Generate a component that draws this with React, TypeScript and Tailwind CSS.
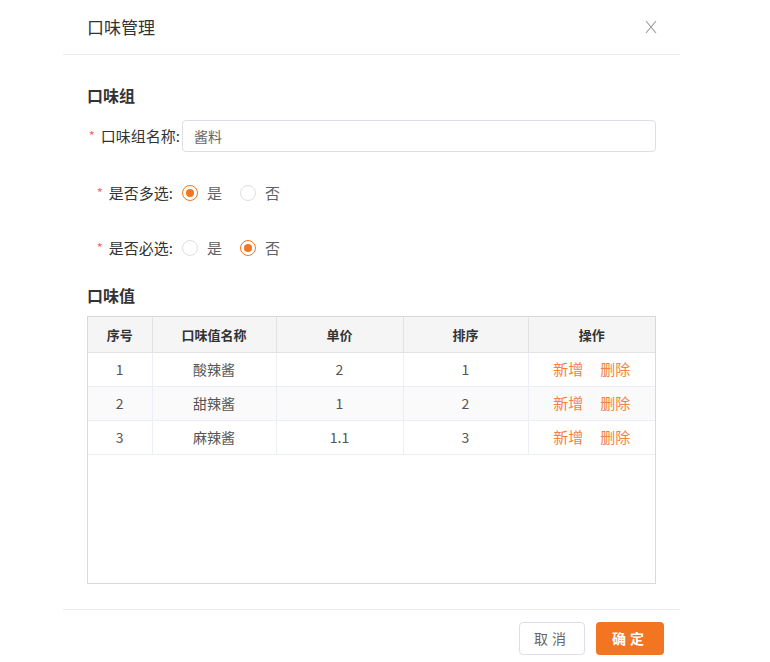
import React from "react";

const ORANGE = "#f47521";

type Row = { id: number; name: string; price: string; sort: number };

const rows: Row[] = [
  { id: 1, name: "酸辣酱", price: "2", sort: 1 },
  { id: 2, name: "甜辣酱", price: "1", sort: 2 },
  { id: 3, name: "麻辣酱", price: "1.1", sort: 3 },
];

function Radio({ checked, label }: { checked: boolean; label: string }) {
  return (
    <label className="flex items-center gap-[9px] cursor-pointer">
      <span
        className={
          checked
            ? "flex h-[16px] w-[16px] items-center justify-center rounded-full border border-[#f47521] bg-white"
            : "h-[16px] w-[16px] rounded-full border border-[#dcdfe6] bg-white"
        }
      >
        {checked && <span className="h-[8px] w-[8px] rounded-full bg-[#f47521]" />}
      </span>
      <span className="text-[15px] text-[#606266]">{label}</span>
    </label>
  );
}

function FormLabel({ text, gap }: { text: string; gap: string }) {
  return (
    <div className={`flex w-[95px] shrink-0 items-center justify-end whitespace-nowrap text-[15px] text-[#333] ${gap}`}>
      <span className="mr-[6px] text-[13px] text-[#f56c6c]">*</span>
      <span>{text}:</span>
    </div>
  );
}

export default function App() {
  return (
    <div
      className="h-[662px] w-[770px] bg-white"
      style={{ fontFamily: '"Noto Sans CJK SC", "Noto Sans", sans-serif' }}
    >
      <div className="ml-[63px] w-[617px]">
        {/* header */}
        <div className="flex h-[55px] items-center justify-between border-b border-[#ebebeb] pl-6 pr-[23px]">
          <span className="text-[17px] text-[#333]">口味管理</span>
          <svg width="12" height="14" viewBox="0 0 12 14" className="text-[#999]">
            <path d="M1 1 L11 13 M11 1 L1 13" stroke="currentColor" strokeWidth="1.1" fill="none" />
          </svg>
        </div>

        {/* body */}
        <div className="px-6">
          <h3 className="mt-[28px] text-[16px] font-bold leading-6 text-[#333]">口味组</h3>

          <div className="mt-[13px] flex h-[32px] items-center">
            <FormLabel text="口味组名称" gap="pr-[2px]" />
            <div className="flex h-[32px] flex-1 items-center rounded-[4px] border border-[#dcdfe6] px-[11px] text-[14px] text-[#666]">
              酱料
            </div>
          </div>

          <div className="mt-[25px] flex h-[32px] items-center">
            <FormLabel text="是否多选" gap="pr-[9px]" />
            <div className="flex items-center gap-[18px]">
              <Radio checked label="是" />
              <Radio checked={false} label="否" />
            </div>
          </div>

          <div className="mt-[23px] flex h-[32px] items-center">
            <FormLabel text="是否必选" gap="pr-[9px]" />
            <div className="flex items-center gap-[18px]">
              <Radio checked={false} label="是" />
              <Radio checked label="否" />
            </div>
          </div>

          <h3 className="mt-[19px] text-[16px] font-bold leading-6 text-[#333]">口味值</h3>

          <div className="mt-[9px] h-[268px] border border-[#d9d9d9]">
            <table className="w-full table-fixed border-collapse text-center">
              <colgroup>
                <col className="w-[64px]" />
                <col className="w-[124px]" />
                <col className="w-[127px]" />
                <col className="w-[125px]" />
                <col />
              </colgroup>
              <thead>
                <tr className="h-[35px] bg-[#f5f5f5] text-[13px] font-bold text-[#333]">
                  {["序号", "口味值名称", "单价", "排序", "操作"].map((h, i) => (
                    <th
                      key={h}
                      className={
                        i < 4
                          ? "border-b border-r border-[#e2e2e2] font-bold"
                          : "border-b border-[#e2e2e2] font-bold"
                      }
                    >
                      {h}
                    </th>
                  ))}
                </tr>
              </thead>
              <tbody className="text-[14px] text-[#555]">
                {rows.map((r, idx) => (
                  <tr key={r.id} className={idx === 1 ? "h-[34px] bg-[#fafafa]" : "h-[34px] bg-white"}>
                    <td className="border-b border-r border-[#ebeef5]">{r.id}</td>
                    <td className="border-b border-r border-[#ebeef5]">{r.name}</td>
                    <td className="border-b border-r border-[#ebeef5]">{r.price}</td>
                    <td className="border-b border-r border-[#ebeef5]">{r.sort}</td>
                    <td className="border-b border-[#ebeef5] text-[15px]">
                      <span className="text-[#f5813f]">新增</span>
                      <span className="ml-[17px] text-[#f5813f]">删除</span>
                    </td>
                  </tr>
                ))}
              </tbody>
            </table>
          </div>
        </div>

        {/* footer */}
        <div className="mt-[25px] flex justify-end gap-[11px] border-t border-[#ebebeb] pr-[16px] pt-[12px]">
          <button className="h-[33px] w-[66px] rounded-[4px] border border-[#dcdfe6] bg-white text-[14px] tracking-[4px] text-[#666]">
            取消
          </button>
          <button
            className="h-[33px] w-[68px] rounded-[4px] text-[14px] font-bold tracking-[4px] text-white"
            style={{ backgroundColor: ORANGE }}
          >
            确定
          </button>
        </div>
      </div>
    </div>
  );
}
